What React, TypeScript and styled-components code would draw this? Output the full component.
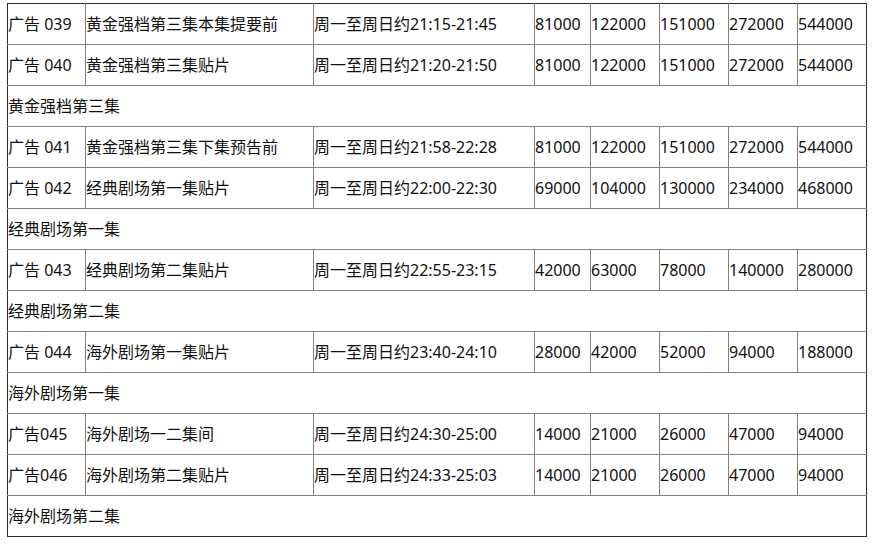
import React from "react";
import styled, { createGlobalStyle } from "styled-components";

const Global = createGlobalStyle`
  html, body { margin: 0; padding: 0; background: #fff; }
  body { font-family: "Noto Sans", "Noto Sans CJK SC", sans-serif; color: #111; }
`;

const Page = styled.div`
  padding: 3px 0 0 7px;
`;

const Table = styled.table`
  border-collapse: collapse;
  table-layout: fixed;
  width: 860px;
  font-size: 16px;
`;

const Cell = styled.td`
  border: 1px solid #808080;
  height: 40px;
  padding: 0;
  vertical-align: middle;
  white-space: nowrap;
  overflow: hidden;
  line-height: 20px;
  tr:first-child > & { border-top-color: #2b2b2b; }
  tr:last-child > & { border-bottom-color: #2b2b2b; }
  &:first-child { border-left-color: #2b2b2b; }
  &:last-child { border-right-color: #2b2b2b; }
`;

type Ad = { kind: "ad"; code: string; name: string; time: string; prices: string[] };
type Group = { kind: "group"; title: string };
type Row = Ad | Group;

const widths = [78, 228, 221, 56, 69, 69, 69, 69];

const rows: Row[] = [
  { kind: "ad", code: "广告 039", name: "黄金强档第三集本集提要前", time: "周一至周日约21:15-21:45", prices: ["81000", "122000", "151000", "272000", "544000"] },
  { kind: "ad", code: "广告 040", name: "黄金强档第三集贴片", time: "周一至周日约21:20-21:50", prices: ["81000", "122000", "151000", "272000", "544000"] },
  { kind: "group", title: "黄金强档第三集" },
  { kind: "ad", code: "广告 041", name: "黄金强档第三集下集预告前", time: "周一至周日约21:58-22:28", prices: ["81000", "122000", "151000", "272000", "544000"] },
  { kind: "ad", code: "广告 042", name: "经典剧场第一集贴片", time: "周一至周日约22:00-22:30", prices: ["69000", "104000", "130000", "234000", "468000"] },
  { kind: "group", title: "经典剧场第一集" },
  { kind: "ad", code: "广告 043", name: "经典剧场第二集贴片", time: "周一至周日约22:55-23:15", prices: ["42000", "63000", "78000", "140000", "280000"] },
  { kind: "group", title: "经典剧场第二集" },
  { kind: "ad", code: "广告 044", name: "海外剧场第一集贴片", time: "周一至周日约23:40-24:10", prices: ["28000", "42000", "52000", "94000", "188000"] },
  { kind: "group", title: "海外剧场第一集" },
  { kind: "ad", code: "广告045", name: "海外剧场一二集间", time: "周一至周日约24:30-25:00", prices: ["14000", "21000", "26000", "47000", "94000"] },
  { kind: "ad", code: "广告046", name: "海外剧场第二集贴片", time: "周一至周日约24:33-25:03", prices: ["14000", "21000", "26000", "47000", "94000"] },
  { kind: "group", title: "海外剧场第二集" },
];

export default function App() {
  return (
    <>
      <Global />
      <Page>
        <Table>
          <colgroup>
            {widths.map((w, i) => (
              <col key={i} style={{ width: w }} />
            ))}
          </colgroup>
          <tbody>
            {rows.map((r, i) =>
              r.kind === "group" ? (
                <tr key={i}>
                  <Cell colSpan={8}>{r.title}</Cell>
                </tr>
              ) : (
                <tr key={i}>
                  <Cell>{r.code}</Cell>
                  <Cell>{r.name}</Cell>
                  <Cell>{r.time}</Cell>
                  {r.prices.map((p, j) => (
                    <Cell key={j}>{p}</Cell>
                  ))}
                </tr>
              )
            )}
          </tbody>
        </Table>
      </Page>
    </>
  );
}
